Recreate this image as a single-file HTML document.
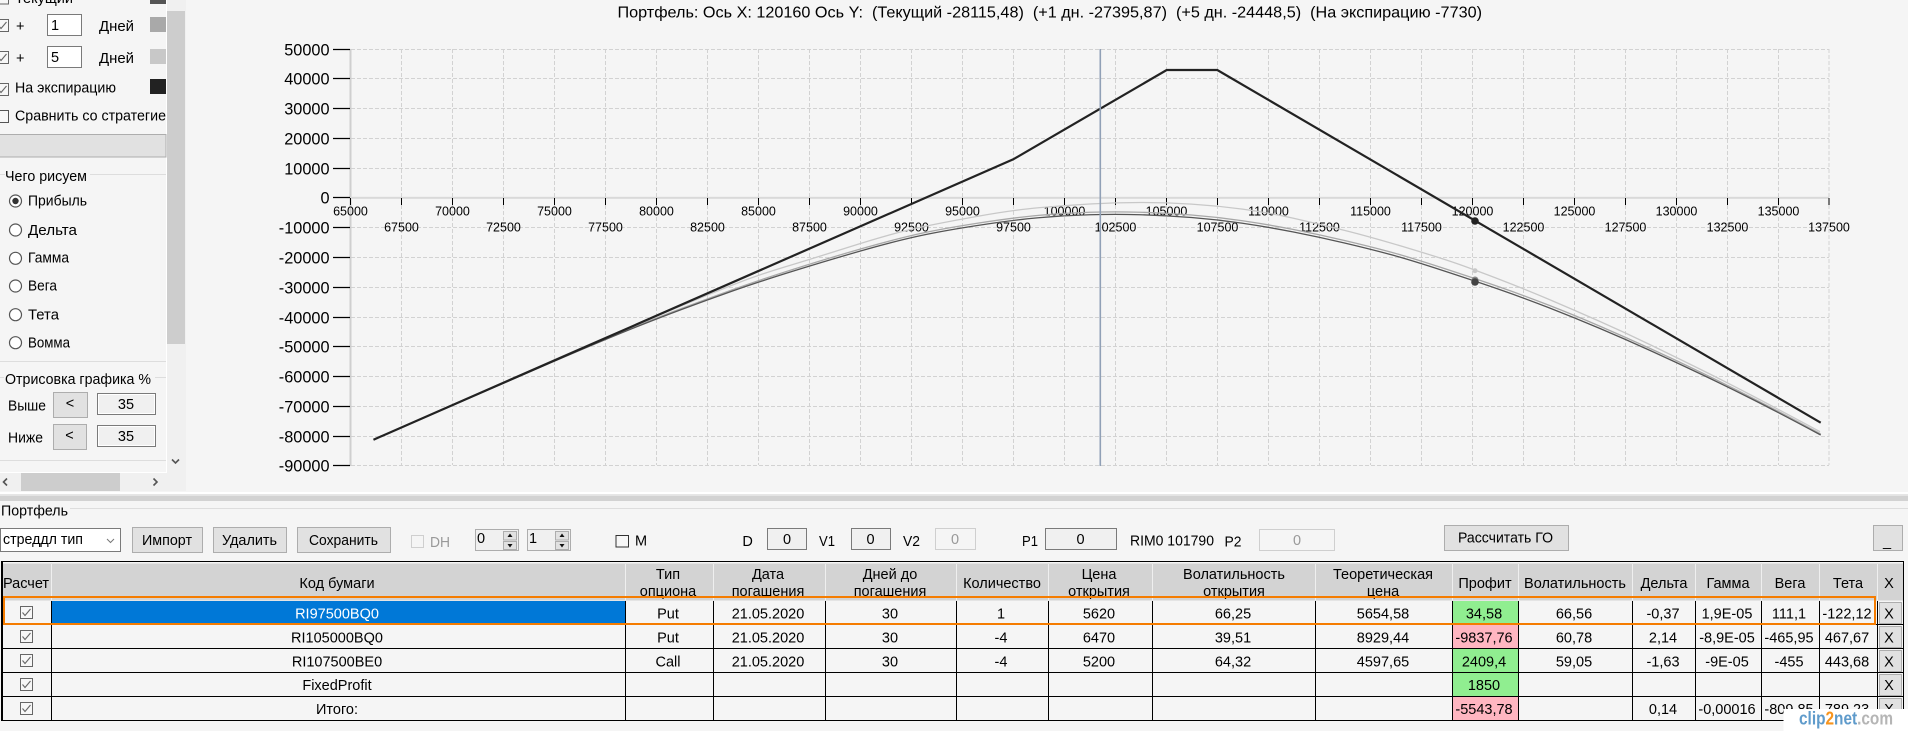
<!DOCTYPE html>
<html lang="ru">
<head>
<meta charset="utf-8">
<title>Портфель</title>
<style>
html,body{margin:0;padding:0;background:#f5f5f5;width:1908px;height:731px;overflow:hidden}
svg{display:block}
text{font-family:"Liberation Sans","Noto Sans CJK SC",sans-serif;fill:#000;white-space:pre}
.p{font-size:14.5px}
.y{font-size:16.3px;text-anchor:end}
.x{font-size:12.5px;text-anchor:middle}
.t{font-size:14.5px;text-anchor:middle}
.g{fill:#999}
.btn{fill:#e1e1e1;stroke:#adadad;stroke-width:1}
.inp{fill:#f0f0f0;stroke:#7a7a7a;stroke-width:1}
.dis{fill:#f5f5f5;stroke:#cfcfcf;stroke-width:1}
.wh{fill:#fff;stroke:#7a7a7a;stroke-width:1}
</style>
</head>
<body>
<svg width="1908" height="731" viewBox="0 0 1908 731" xmlns="http://www.w3.org/2000/svg">
<defs>
<g id="cb"><rect x=".5" y=".5" width="12" height="12" fill="#f7f7f7" stroke="#666"/><path d="M2.5 6.5L5 9.5L10.5 3" fill="none" stroke="#666" stroke-width="1.1"/></g>
<clipPath id="hc"><rect x="3" y="563" width="1900" height="37"/></clipPath>
<clipPath id="rc"><rect x="3" y="563" width="48" height="37"/></clipPath>
</defs>
<rect width="1908" height="731" fill="#f5f5f5"/>

<!-- left panel -->
<rect x="166" y="0" width="1" height="473" fill="#fff"/>
<rect x="0" y="472" width="167" height="1" fill="#fff"/>
<rect x="167" y="0" width="19" height="473" fill="#f0f0f0"/>
<rect x="167" y="11" width="18" height="333" fill="#cdcdcd"/>
<path d="M172 459.5L175.5 463L179 459.5" fill="none" stroke="#555" stroke-width="1.6"/>
<rect x="0" y="473" width="186" height="18" fill="#f0f0f0"/>
<rect x="21" y="473" width="99" height="18" fill="#cdcdcd"/>
<path d="M7 478.5L3.5 482L7 485.5M153.5 478.5L157 482L153.5 485.5" fill="none" stroke="#555" stroke-width="1.6"/>

<rect x="150" y="-2" width="16" height="6" fill="#555"/>
<rect x="-4.5" y="-8" width="13" height="12" fill="#f7f7f7" stroke="#666"/>
<text class="p" x="15" y="3">Текущий</text>

<use href="#cb" x="-4" y="19"/>
<text class="p" x="16" y="31">+</text>
<rect x="47.5" y="14.5" width="34" height="21" class="wh"/>
<text class="p" x="51" y="30">1</text>
<text class="p" x="99" y="31" textLength="35" lengthAdjust="spacingAndGlyphs">Дней</text>
<rect x="150" y="17" width="16" height="15" fill="#a9a9a9"/>

<use href="#cb" x="-4" y="51"/>
<text class="p" x="16" y="63">+</text>
<rect x="47.5" y="46.5" width="34" height="21" class="wh"/>
<text class="p" x="51" y="62">5</text>
<text class="p" x="99" y="63" textLength="35" lengthAdjust="spacingAndGlyphs">Дней</text>
<rect x="150" y="49" width="16" height="15" fill="#c8c8c8"/>

<use href="#cb" x="-4" y="83"/>
<text class="p" x="15" y="92.5" textLength="101" lengthAdjust="spacingAndGlyphs">На экспирацию</text>
<rect x="150" y="79" width="16" height="15" fill="#222"/>

<rect x="-4.5" y="110.5" width="13" height="12" fill="#f7f7f7" stroke="#555"/>
<text class="p" x="15" y="120.7" textLength="151" lengthAdjust="spacingAndGlyphs">Сравнить со стратегие</text>

<rect x="-1" y="134.5" width="167" height="22.5" class="btn"/>

<path d="M0 174.5H5M90 174.5H166M0 361.5H166M0 377.5H4M155 377.5H166M0 460.5H166" stroke="#ddd" fill="none"/>
<text class="p" x="5" y="181" textLength="82" lengthAdjust="spacingAndGlyphs">Чего рисуем</text>

<circle cx="15.5" cy="201" r="6" fill="#fff" stroke="#555" stroke-width="1.2"/><circle cx="15.5" cy="201" r="3.2" fill="#333"/>
<text class="p" x="28" y="205.7" textLength="59" lengthAdjust="spacingAndGlyphs">Прибыль</text>
<circle cx="15.5" cy="230" r="6" fill="#fff" stroke="#555" stroke-width="1.2"/>
<text class="p" x="28" y="235" textLength="49" lengthAdjust="spacingAndGlyphs">Дельта</text>
<circle cx="15.5" cy="258.3" r="6" fill="#fff" stroke="#555" stroke-width="1.2"/>
<text class="p" x="28" y="262.7" textLength="41" lengthAdjust="spacingAndGlyphs">Гамма</text>
<circle cx="15.5" cy="286" r="6" fill="#fff" stroke="#555" stroke-width="1.2"/>
<text class="p" x="28" y="290.7" textLength="29" lengthAdjust="spacingAndGlyphs">Вега</text>
<circle cx="15.5" cy="314.7" r="6" fill="#fff" stroke="#555" stroke-width="1.2"/>
<text class="p" x="28" y="319.3" textLength="31" lengthAdjust="spacingAndGlyphs">Тета</text>
<circle cx="15.5" cy="342.7" r="6" fill="#fff" stroke="#555" stroke-width="1.2"/>
<text class="p" x="28" y="347.7" textLength="42" lengthAdjust="spacingAndGlyphs">Вомма</text>

<text class="p" x="5" y="384" textLength="146" lengthAdjust="spacingAndGlyphs">Отрисовка графика %</text>
<text class="p" x="8" y="410.7" textLength="38" lengthAdjust="spacingAndGlyphs">Выше</text>
<rect x="53.5" y="392.5" width="34" height="25" class="btn"/>
<text class="p" x="70" y="408" text-anchor="middle">&lt;</text>
<rect x="97.5" y="393.5" width="58" height="21" class="inp"/>
<rect x="98.5" y="394.5" width="56" height="19" fill="none" stroke="#fff"/>
<text class="p" x="126" y="409" text-anchor="middle">35</text>
<text class="p" x="8" y="442.7" textLength="35" lengthAdjust="spacingAndGlyphs">Ниже</text>
<rect x="53.5" y="424.5" width="33" height="25" class="btn"/>
<text class="p" x="69.5" y="440" text-anchor="middle">&lt;</text>
<rect x="97.5" y="425.5" width="58" height="21" class="inp"/>
<rect x="98.5" y="426.5" width="56" height="19" fill="none" stroke="#fff"/>
<text class="p" x="126" y="441" text-anchor="middle">35</text>

<!-- chart title -->
<text x="617.5" y="17.7" font-size="16" textLength="864.5" lengthAdjust="spacingAndGlyphs">Портфель: Ось X: 120160 Ось Y:  (Текущий -28115,48)  (+1 дн. -27395,87)  (+5 дн. -24448,5)  (На экспирацию -7730)</text>

<!-- grid -->
<path fill="none" stroke="#d2d2d2" stroke-dasharray="4 2" d="M401.5 49V465M452.5 49V465M503.5 49V465M554.5 49V465M605.5 49V465M656.5 49V465M707.5 49V465M758.5 49V465M809.5 49V465M860.5 49V465M911.5 49V465M962.5 49V465M1013.5 49V465M1064.5 49V465M1115.5 49V465M1166.5 49V465M1217.5 49V465M1268.5 49V465M1319.5 49V465M1370.5 49V465M1421.5 49V465M1472.5 49V465M1523.5 49V465M1574.5 49V465M1625.5 49V465M1676.5 49V465M1727.5 49V465M1778.5 49V465M1829 49V465M351 49.5H1829M351 78.5H1829M351 108.5H1829M351 138.5H1829M351 168.5H1829M351 227.5H1829M351 257.5H1829M351 287.5H1829M351 317.5H1829M351 346.5H1829M351 376.5H1829M351 406.5H1829M351 436.5H1829M351 465.5H1829"/>
<rect x="349.5" y="49" width="2" height="417" fill="#cfcfcf"/>
<rect x="350" y="196.8" width="1479" height="2" fill="#d9d9d9"/>
<!-- y ticks -->
<path fill="none" stroke="#000" stroke-width="1.2" d="M333 49.5H350M333 78.5H350M333 108.5H350M333 138.5H350M333 168.5H350M333 197.5H350M333 227.5H350M333 257.5H350M333 287.5H350M333 317.5H350M333 346.5H350M333 376.5H350M333 406.5H350M333 436.5H350M333 465.5H350"/>
<!-- x ticks -->
<path fill="none" stroke="#000" d="M350.5 198V205M401.5 198V205M452.5 198V205M503.5 198V205M554.5 198V205M605.5 198V205M656.5 198V205M707.5 198V205M758.5 198V205M809.5 198V205M860.5 198V205M911.5 198V205M962.5 198V205M1013.5 198V205M1064.5 198V205M1115.5 198V205M1166.5 198V205M1217.5 198V205M1268.5 198V205M1319.5 198V205M1370.5 198V205M1421.5 198V205M1472.5 198V205M1523.5 198V205M1574.5 198V205M1625.5 198V205M1676.5 198V205M1727.5 198V205M1778.5 198V205M1829 198V205"/>

<!-- y labels -->
<text class="y" x="329.5" y="55.5">50000</text>
<text class="y" x="329.5" y="84.5">40000</text>
<text class="y" x="329.5" y="114.5">30000</text>
<text class="y" x="329.5" y="144.5">20000</text>
<text class="y" x="329.5" y="174.5">10000</text>
<text class="y" x="329.5" y="203.5">0</text>
<text class="y" x="329.5" y="233.5">-10000</text>
<text class="y" x="329.5" y="263.5">-20000</text>
<text class="y" x="329.5" y="293.5">-30000</text>
<text class="y" x="329.5" y="323.5">-40000</text>
<text class="y" x="329.5" y="352.5">-50000</text>
<text class="y" x="329.5" y="382.5">-60000</text>
<text class="y" x="329.5" y="412.5">-70000</text>
<text class="y" x="329.5" y="442.5">-80000</text>
<text class="y" x="329.5" y="471.5">-90000</text>

<!-- x labels -->
<text class="x" x="350.5" y="215.7">65000</text>
<text class="x" x="452.5" y="215.7">70000</text>
<text class="x" x="554.5" y="215.7">75000</text>
<text class="x" x="656.5" y="215.7">80000</text>
<text class="x" x="758.5" y="215.7">85000</text>
<text class="x" x="860.5" y="215.7">90000</text>
<text class="x" x="962.5" y="215.7">95000</text>
<text class="x" x="1064.5" y="215.7">100000</text>
<text class="x" x="1166.5" y="215.7">105000</text>
<text class="x" x="1268.5" y="215.7">110000</text>
<text class="x" x="1370.5" y="215.7">115000</text>
<text class="x" x="1472.5" y="215.7">120000</text>
<text class="x" x="1574.5" y="215.7">125000</text>
<text class="x" x="1676.5" y="215.7">130000</text>
<text class="x" x="1778.5" y="215.7">135000</text>
<text class="x" x="401.5" y="231.7">67500</text>
<text class="x" x="503.5" y="231.7">72500</text>
<text class="x" x="605.5" y="231.7">77500</text>
<text class="x" x="707.5" y="231.7">82500</text>
<text class="x" x="809.5" y="231.7">87500</text>
<text class="x" x="911.5" y="231.7">92500</text>
<text class="x" x="1013.5" y="231.7">97500</text>
<text class="x" x="1115.5" y="231.7">102500</text>
<text class="x" x="1217.5" y="231.7">107500</text>
<text class="x" x="1319.5" y="231.7">112500</text>
<text class="x" x="1421.5" y="231.7">117500</text>
<text class="x" x="1523.5" y="231.7">122500</text>
<text class="x" x="1625.5" y="231.7">127500</text>
<text class="x" x="1727.5" y="231.7">132500</text>
<text class="x" x="1829" y="231.7">137500</text>

<!-- curves -->
<path fill="none" stroke="#c8c8c8" stroke-width="1.3" d="M373.5 439.7Q500 384 550 361.75Q600 339.5 628 328Q656 316.5 681.5 305.75Q707 295 732.5 285Q758 275 783 267.5Q808 260 850 246.75Q892 233.5 916 228.25Q940 223 976.5 216.5Q1013 210 1038.5 207.75Q1064 205.5 1089.5 204Q1115 202.5 1140.5 202.5Q1166 202.5 1191.5 204.1Q1217 205.7 1242.5 209.1Q1268 212.5 1293.5 218.25Q1319 224 1344.5 230.35Q1370 236.7 1406 247.5Q1442 258.3 1458.5 264.15Q1475 270 1499.75 279.5Q1524.5 289 1549.25 299.5Q1574 310 1600 321.5Q1626 333 1651.25 345.25Q1676.5 357.5 1702.25 370.25Q1728 383 1753.3 396.25Q1778.6 409.5 1820 431.7"/>
<path fill="none" stroke="#a8a8a8" stroke-width="1.3" d="M373.5 439.7Q500 384.4 550 362.6Q600 340.8 628 329.4Q656 318 681.5 308.5Q707 299 732.5 289.75Q758 280.5 793.5 269.25Q829 258 860.5 249Q892 240 916 234.5Q940 229 976.5 223.35Q1013 217.7 1038.5 215.35Q1064 213 1089.5 212.25Q1115 211.5 1140.5 212.25Q1166 213 1191.5 215Q1217 217 1242.5 220.75Q1268 224.5 1293.5 229.5Q1319 234.5 1344.5 240.5Q1370 246.5 1389.5 251.75Q1409 257 1442 267.75Q1475 278.5 1499.5 287Q1524 295.5 1549 305.25Q1574 315 1600 326.25Q1626 337.5 1651.25 349Q1676.5 360.5 1702.25 373Q1728 385.5 1753.3 398.4Q1778.6 411.3 1820.7 434"/>
<path fill="none" stroke="#555" stroke-width="1.3" d="M373.5 439.7Q500 384.6 550 363.05Q600 341.5 628 330.25Q656 319 681.5 309.5Q707 300 732.5 291Q758 282 793.5 271Q829 260 860.5 251Q892 242 916 236.65Q940 231.3 976.5 225.65Q1013 220 1038.5 217.75Q1064 215.5 1089.5 214.75Q1115 214 1140.5 214.75Q1166 215.5 1191.5 217.5Q1217 219.5 1242.5 223.25Q1268 227 1293.5 232Q1319 237 1344.5 243Q1370 249 1389.5 254.25Q1409 259.5 1442 270.25Q1475 281 1499.5 289.5Q1524 298 1549 307.75Q1574 317.5 1600 328.5Q1626 339.5 1651.25 351Q1676.5 362.5 1702.25 374.75Q1728 387 1753.3 399.75Q1778.6 412.5 1820.7 435"/>
<polyline fill="none" stroke="#222" stroke-width="2.2" points="373.5,439.7 1013.3,159.3 1166.7,70 1217.3,70 1820.7,422.7"/>
<rect x="1099.5" y="49" width="1.6" height="417" fill="#90a0b6"/>
<circle cx="1475" cy="270.7" r="2.5" fill="#c8c8c8"/>
<circle cx="1475" cy="280" r="3.5" fill="#888"/>
<circle cx="1475" cy="282" r="3.8" fill="#444"/>
<circle cx="1475" cy="221" r="3.8" fill="#222"/>

<!-- splitter -->
<rect x="0" y="492" width="1908" height="2" fill="#fff"/>
<rect x="0" y="494" width="1908" height="1" fill="#e6e6e6"/>
<rect x="0" y="495.5" width="1908" height="5.5" fill="#d2d2d2"/>

<!-- portfolio toolbar -->
<path d="M70 508.5H1908" stroke="#ddd"/>
<text class="p" x="1" y="515.7" textLength="67" lengthAdjust="spacingAndGlyphs">Портфель</text>

<rect x=".5" y="528.5" width="120" height="23" class="wh"/>
<text class="p" x="3" y="544" textLength="80" lengthAdjust="spacingAndGlyphs">стреддл тип</text>
<path d="M107 539L110.5 542.5L114 539" fill="none" stroke="#777"/>

<rect x="132.5" y="527.5" width="70" height="25" class="btn"/>
<text class="p" x="142" y="545" textLength="50" lengthAdjust="spacingAndGlyphs">Импорт</text>
<rect x="213.5" y="527.5" width="73" height="25" class="btn"/>
<text class="p" x="222" y="545" textLength="55" lengthAdjust="spacingAndGlyphs">Удалить</text>
<rect x="297.5" y="527.5" width="93" height="25" class="btn"/>
<text class="p" x="309" y="545" textLength="69" lengthAdjust="spacingAndGlyphs">Сохранить</text>

<rect x="411.5" y="535.5" width="12" height="12" class="dis"/>
<text class="p g" x="430" y="547" textLength="20" lengthAdjust="spacingAndGlyphs">DH</text>

<rect x="475.5" y="529.5" width="43" height="21" fill="#f0f0f0" stroke="#adadad"/>
<text class="p" x="477" y="543">0</text>
<rect x="503.5" y="531.5" width="13" height="8.5" fill="#e1e1e1" stroke="#adadad"/>
<rect x="503.5" y="541.5" width="13" height="8" fill="#e1e1e1" stroke="#adadad"/>
<path d="M510 533.5l2.5 3.5h-5zM510 547.5l2.5-3.5h-5z" fill="#111"/>
<rect x="527.5" y="529.5" width="43" height="21" fill="#f0f0f0" stroke="#adadad"/>
<text class="p" x="529" y="543">1</text>
<rect x="555.5" y="531.5" width="13" height="8.5" fill="#e1e1e1" stroke="#adadad"/>
<rect x="555.5" y="541.5" width="13" height="8" fill="#e1e1e1" stroke="#adadad"/>
<path d="M562 533.5l2.5 3.5h-5zM562 547.5l2.5-3.5h-5z" fill="#111"/>

<rect x="616" y="535.5" width="12.5" height="11.5" fill="#f7f7f7" stroke="#333"/>
<text class="p" x="635" y="545.7">M</text>

<text class="p" x="742.4" y="546">D</text>
<rect x="767.5" y="528.5" width="39" height="21" class="inp"/>
<text class="t" x="787" y="544">0</text>
<text class="p" x="819" y="546" textLength="16" lengthAdjust="spacingAndGlyphs">V1</text>
<rect x="851.5" y="528.5" width="39" height="21" class="inp"/>
<text class="t" x="870.5" y="544">0</text>
<text class="p" x="903" y="546" textLength="17" lengthAdjust="spacingAndGlyphs">V2</text>
<rect x="935.5" y="528.5" width="40" height="21" class="dis"/>
<text class="t g" x="955" y="544">0</text>
<text class="p" x="1022" y="546" textLength="16" lengthAdjust="spacingAndGlyphs">P1</text>
<rect x="1045.5" y="528.5" width="71" height="21" class="inp"/>
<text class="t" x="1080.5" y="544">0</text>
<text class="p" x="1130" y="545.7" textLength="84" lengthAdjust="spacingAndGlyphs">RIM0 101790</text>
<text class="p" x="1224.5" y="546.5" textLength="17" lengthAdjust="spacingAndGlyphs">P2</text>
<rect x="1259.5" y="529.5" width="75" height="21" class="dis"/>
<text class="t g" x="1297" y="545">0</text>

<rect x="1444.5" y="525.5" width="124" height="25" class="btn"/>
<text class="p" x="1458" y="542.7" textLength="95" lengthAdjust="spacingAndGlyphs">Рассчитать ГО</text>
<rect x="1873.5" y="525.5" width="29" height="25" class="btn"/>
<text class="t" x="1887" y="546">_</text>

<!-- table header -->
<rect x="3" y="563.5" width="1900" height="37" fill="#d3d3d3"/>
<path fill="none" stroke="#efefef" d="M51.5 564V600M625.5 564V600M713.5 564V600M825.5 564V600M956.5 564V600M1048.5 564V600M1152.5 564V600M1315.5 564V600M1452.5 564V600M1518.5 564V600M1632.5 564V600M1695.5 564V600M1761.5 564V600M1819.5 564V600M1877.5 564V600"/>
<g clip-path="url(#rc)"><text class="t" x="26" y="588">Расчет</text></g>
<g clip-path="url(#hc)">
<text class="t" x="337" y="588">Код бумаги</text>
<text class="t" x="668" y="579">Тип</text><text class="t" x="668" y="596">опциона</text>
<text class="t" x="768" y="579">Дата</text><text class="t" x="768" y="596">погашения</text>
<text class="t" x="890" y="579">Дней до</text><text class="t" x="890" y="596">погашения</text>
<text class="t" x="1002" y="588">Количество</text>
<text class="t" x="1099" y="579">Цена</text><text class="t" x="1099" y="596">открытия</text>
<text class="t" x="1234" y="579">Волатильность</text><text class="t" x="1234" y="596">открытия</text>
<text class="t" x="1383" y="579">Теоретическая</text><text class="t" x="1383" y="596">цена</text>
<text class="t" x="1485" y="588">Профит</text>
<text class="t" x="1575" y="588">Волатильность</text>
<text class="t" x="1664" y="588">Дельта</text>
<text class="t" x="1728" y="588">Гамма</text>
<text class="t" x="1790" y="588">Вега</text>
<text class="t" x="1848" y="588">Тета</text>
<text class="t" x="1889" y="588">X</text>
</g>

<!-- table cells backgrounds -->
<rect x="52" y="601" width="573" height="23" fill="#0078d7"/>
<rect x="1453" y="601" width="66" height="23" fill="#90ee90"/>
<rect x="1453" y="625" width="66" height="23" fill="#ffb6c1"/>
<rect x="1453" y="649" width="66" height="23" fill="#90ee90"/>
<rect x="1453" y="673" width="66" height="23" fill="#90ee90"/>
<rect x="1453" y="697" width="66" height="23" fill="#ffb6c1"/>

<!-- X buttons -->
<rect x="1879.5" y="602.5" width="22" height="21" class="btn"/>
<rect x="1879.5" y="626.5" width="22" height="21" class="btn"/>
<rect x="1879.5" y="650.5" width="22" height="21" class="btn"/>
<rect x="1879.5" y="674.5" width="22" height="21" class="btn"/>
<rect x="1879.5" y="698.5" width="22" height="21" class="btn"/>

<!-- table lines -->
<path fill="none" stroke="#000" d="M1 561.5H1903.5M3 648.5H1903M3 672.5H1903M3 696.5H1903M3 720.5H1903M3 624.5H1903M51.5 601V720M625.5 601V720M713.5 601V720M825.5 601V720M956.5 601V720M1048.5 601V720M1152.5 601V720M1315.5 601V720M1452.5 601V720M1518.5 601V720M1632.5 601V720M1695.5 601V720M1761.5 601V720M1819.5 601V720M1877.5 601V720M1903.5 561V721"/>
<rect x="1" y="561" width="2" height="160" fill="#000"/>

<!-- checkboxes -->
<use href="#cb" x="20" y="606"/>
<use href="#cb" x="20" y="630"/>
<use href="#cb" x="20" y="654"/>
<use href="#cb" x="20" y="678"/>
<use href="#cb" x="20" y="702"/>

<!-- row 1 -->
<text class="t" x="337" y="618.3" style="fill:#fff">RI97500BQ0</text>
<text class="t" x="668" y="618.3">Put</text>
<text class="t" x="768" y="618.3">21.05.2020</text>
<text class="t" x="890" y="618.3">30</text>
<text class="t" x="1001" y="618.3">1</text>
<text class="t" x="1099" y="618.3">5620</text>
<text class="t" x="1233" y="618.3">66,25</text>
<text class="t" x="1383" y="618.3">5654,58</text>
<text class="t" x="1484" y="618.3">34,58</text>
<text class="t" x="1574" y="618.3">66,56</text>
<text class="t" x="1663" y="618.3">-0,37</text>
<text class="t" x="1727" y="618.3">1,9E-05</text>
<text class="t" x="1789" y="618.3">111,1</text>
<text class="t" x="1847" y="618.3">-122,12</text>
<text class="t" x="1889" y="618.3">X</text>

<!-- row 2 -->
<text class="t" x="337" y="642.3">RI105000BQ0</text>
<text class="t" x="668" y="642.3">Put</text>
<text class="t" x="768" y="642.3">21.05.2020</text>
<text class="t" x="890" y="642.3">30</text>
<text class="t" x="1001" y="642.3">-4</text>
<text class="t" x="1099" y="642.3">6470</text>
<text class="t" x="1233" y="642.3">39,51</text>
<text class="t" x="1383" y="642.3">8929,44</text>
<text class="t" x="1484" y="642.3">-9837,76</text>
<text class="t" x="1574" y="642.3">60,78</text>
<text class="t" x="1663" y="642.3">2,14</text>
<text class="t" x="1727" y="642.3">-8,9E-05</text>
<text class="t" x="1789" y="642.3">-465,95</text>
<text class="t" x="1847" y="642.3">467,67</text>
<text class="t" x="1889" y="642.3">X</text>

<!-- row 3 -->
<text class="t" x="337" y="666.3">RI107500BE0</text>
<text class="t" x="668" y="666.3">Call</text>
<text class="t" x="768" y="666.3">21.05.2020</text>
<text class="t" x="890" y="666.3">30</text>
<text class="t" x="1001" y="666.3">-4</text>
<text class="t" x="1099" y="666.3">5200</text>
<text class="t" x="1233" y="666.3">64,32</text>
<text class="t" x="1383" y="666.3">4597,65</text>
<text class="t" x="1484" y="666.3">2409,4</text>
<text class="t" x="1574" y="666.3">59,05</text>
<text class="t" x="1663" y="666.3">-1,63</text>
<text class="t" x="1727" y="666.3">-9E-05</text>
<text class="t" x="1789" y="666.3">-455</text>
<text class="t" x="1847" y="666.3">443,68</text>
<text class="t" x="1889" y="666.3">X</text>

<!-- row 4 -->
<text class="t" x="337" y="690">FixedProfit</text>
<text class="t" x="1484" y="690">1850</text>
<text class="t" x="1889" y="690">X</text>

<!-- row 5 -->
<text class="t" x="337" y="714">Итого:</text>
<text class="t" x="1484" y="714">-5543,78</text>
<text class="t" x="1663" y="714">0,14</text>
<text class="t" x="1727" y="714">-0,00016</text>
<text class="t" x="1789" y="714">-809,85</text>
<text class="t" x="1847" y="714">789,23</text>
<text class="t" x="1889" y="714">X</text>

<!-- selection outline -->
<rect x="4" y="597" width="1871" height="27" fill="none" stroke="#f57c00" stroke-width="2"/>

<!-- watermark -->
<rect x="1783.5" y="709" width="124.5" height="22" fill="#fff"/>
<text x="1799" y="724.5" font-size="18" font-weight="bold" textLength="94" lengthAdjust="spacingAndGlyphs"><tspan style="fill:#5f9bcb">clip</tspan><tspan style="fill:#f7941d">2</tspan><tspan style="fill:#5f9bcb">net</tspan><tspan style="fill:#b5b5b5">.com</tspan></text>
</svg>
</body>
</html>
